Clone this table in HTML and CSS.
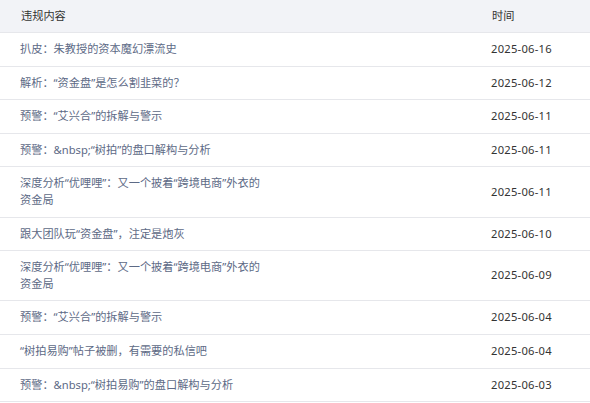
FILE: index.html
```html
<!DOCTYPE html>
<html lang="zh-CN">
<head>
<meta charset="utf-8">
<link rel="stylesheet" href="styles.css">
</head>
<body>
<table class="tbl">
  <colgroup><col class="c-content"><col class="c-gap"><col class="c-time"></colgroup>
  <thead>
    <tr><th>违规内容</th><th></th><th>时间</th></tr>
  </thead>
  <tbody>
    <tr><td class="content">扒皮：朱教授的资本魔幻漂流史</td><td></td><td class="time">2025-06-16</td></tr>
    <tr><td class="content">解析：“资金盘”是怎么割韭菜的？</td><td></td><td class="time">2025-06-12</td></tr>
    <tr><td class="content">预警：“艾兴合”的拆解与警示</td><td></td><td class="time">2025-06-11</td></tr>
    <tr><td class="content">预警：&amp;nbsp;“树拍”的盘口解构与分析</td><td></td><td class="time">2025-06-11</td></tr>
    <tr><td class="content">深度分析“优哩哩”：又一个披着“跨境电商”外衣的资金局</td><td></td><td class="time">2025-06-11</td></tr>
    <tr><td class="content">跟大团队玩“资金盘”，注定是炮灰</td><td></td><td class="time">2025-06-10</td></tr>
    <tr><td class="content">深度分析“优哩哩”：又一个披着“跨境电商”外衣的资金局</td><td></td><td class="time">2025-06-09</td></tr>
    <tr><td class="content">预警：“艾兴合”的拆解与警示</td><td></td><td class="time">2025-06-04</td></tr>
    <tr><td class="content">“树拍易购”帖子被删，有需要的私信吧</td><td></td><td class="time">2025-06-04</td></tr>
    <tr><td class="content">预警：&amp;nbsp;“树拍易购”的盘口解构与分析</td><td></td><td class="time">2025-06-03</td></tr>
  </tbody>
</table>
</body>
</html>
```
FILE: styles.css
```css
html, body {
  margin: 0;
  padding: 0;
  background: #ffffff;
}
body {
  font-family: "Noto Sans", "Noto Sans CJK SC", sans-serif;
  font-size: 11.2px;
}
.tbl {
  width: 590px;
  border-collapse: collapse;
  table-layout: fixed;
}
.c-content { width: 288px; }
.c-time { width: 119px; }
.tbl th {
  background: #f2f3f7;
  color: #333333;
  font-weight: normal;
  text-align: left;
  padding: 8px 20px 8px 21px;
  line-height: 16px;
  height: 16px;
  border-bottom: 1px solid #e6e7eb;
}
.tbl td {
  padding: 8px 20px;
  line-height: 16.6px;
  border-bottom: 1px solid #e6e7eb;
  vertical-align: middle;
}
.tbl td.content {
  color: #5d6a86;
}
.tbl td.time {
  color: #333333;
  letter-spacing: 0.25px;
}
```
